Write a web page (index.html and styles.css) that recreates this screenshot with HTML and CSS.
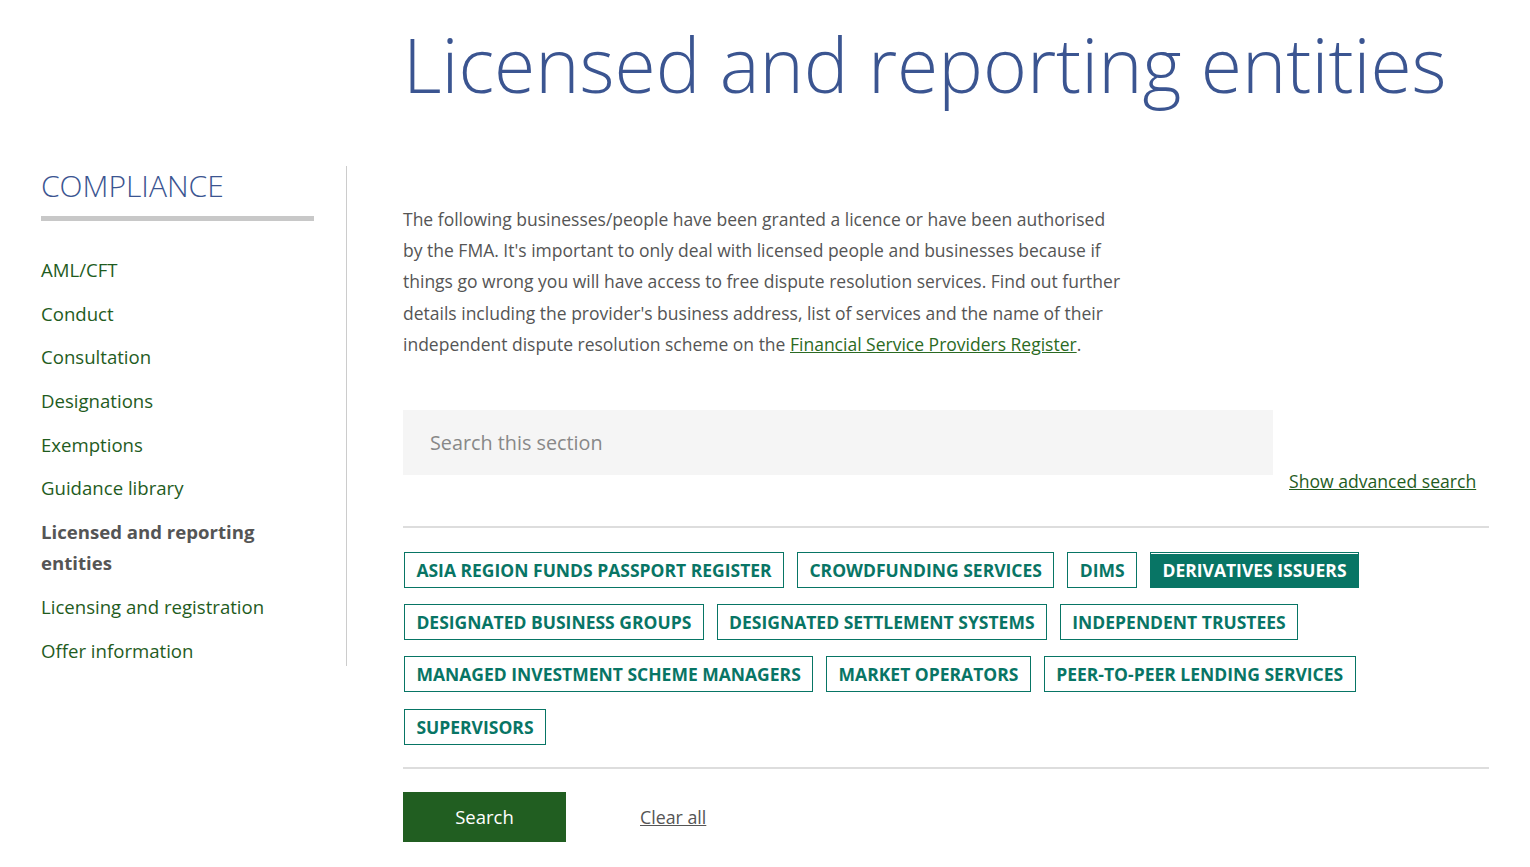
FILE: index.html
```html
<!DOCTYPE html>
<html lang="en">
<head>
<meta charset="utf-8">
<title>Licensed and reporting entities</title>
<link rel="stylesheet" href="styles.css">
</head>
<body>
<div class="page">
  <div class="title-row">
    <h1 class="title">Licensed and reporting entities</h1>
  </div>
  <div class="layout">
    <aside class="sidebar">
      <h2 class="side-heading">COMPLIANCE</h2>
      <div class="side-bar"></div>
      <ul class="side-nav">
        <li><a href="#">AML/CFT</a></li>
        <li><a href="#">Conduct</a></li>
        <li><a href="#">Consultation</a></li>
        <li><a href="#">Designations</a></li>
        <li><a href="#">Exemptions</a></li>
        <li><a href="#">Guidance library</a></li>
        <li class="current"><span>Licensed and reporting entities</span></li>
        <li><a href="#">Licensing and registration</a></li>
        <li><a href="#">Offer information</a></li>
      </ul>
    </aside>
    <main class="main">
      <p class="intro">The following businesses/people have been granted a licence or have been authorised by the FMA. It's important to only deal with licensed people and businesses because if things go wrong you will have access to free dispute resolution services. Find out further details including the provider's business address, list of services and the name of their independent dispute resolution scheme on the <a href="#">Financial Service Providers Register</a>.</p>
      <div class="search-row">
        <input class="search-input" type="text" placeholder="Search this section">
        <a class="adv-link" href="#">Show advanced search</a>
      </div>
      <hr class="rule">
      <div class="tags">
        <button class="tag">ASIA REGION FUNDS PASSPORT REGISTER</button>
        <button class="tag">CROWDFUNDING SERVICES</button>
        <button class="tag">DIMS</button>
        <button class="tag active">DERIVATIVES ISSUERS</button>
        <button class="tag">DESIGNATED BUSINESS GROUPS</button>
        <button class="tag">DESIGNATED SETTLEMENT SYSTEMS</button>
        <button class="tag">INDEPENDENT TRUSTEES</button>
        <button class="tag">MANAGED INVESTMENT SCHEME MANAGERS</button>
        <button class="tag">MARKET OPERATORS</button>
        <button class="tag">PEER-TO-PEER LENDING SERVICES</button>
        <button class="tag">SUPERVISORS</button>
      </div>
      <hr class="rule rule-bottom">
      <div class="actions">
        <button class="search-btn">Search</button>
        <a class="clear-link" href="#">Clear all</a>
      </div>
    </main>
  </div>
</div>
</body>
</html>
```

FILE: styles.css
```css
* { box-sizing: border-box; }
html, body { margin: 0; padding: 0; background: #fff; }
body {
  font-family: "Open Sans", "Liberation Sans", sans-serif;
  color: #555;
}
.page {
  width: 1530px;
  padding-left: 41px;
}
.title-row {
  padding-left: 362px;
  padding-top: 14px;
  height: 166px;
}
.title {
  margin: 0;
  font-weight: 300;
  font-size: 75px;
  line-height: 100px;
  color: #3b5591;
  white-space: nowrap;
}
.layout {
  display: grid;
  grid-template-columns: 306px 1fr;
  column-gap: 56px;
  align-items: start;
}
.sidebar {
  border-right: 1px solid #ccc;
  padding-right: 32px;
}
.side-heading {
  margin: 0;
  font-weight: 300;
  font-size: 30px;
  line-height: 40px;
  color: #3b5591;
}
.side-bar {
  height: 5px;
  background: #c8c8c8;
  margin-top: 10px;
}
.side-nav {
  list-style: none;
  margin: 33px 0 0;
  padding: 0;
}
.side-nav li {
  font-size: 18.6px;
  line-height: 31px;
  margin-bottom: 12.7px;
}
.side-nav li:last-child { margin-bottom: 0; }
.side-nav a {
  color: #1f5c1e;
  text-decoration: none;
}
.side-nav .current {
  font-weight: 700;
  color: #555;
}
.main {
  padding-right: 41px;
}
.intro {
  margin: 38px 0 0;
  width: 725px;
  font-size: 17.5px;
  line-height: 31.2px;
  color: #555;
}
.intro a {
  color: #2b6a23;
  text-decoration: underline;
}
.search-row {
  display: flex;
  align-items: flex-end;
  gap: 16px;
  margin-top: 50px;
}
.search-input {
  flex: none;
  width: 870px;
  height: 65px;
  border: 0;
  background: #f5f5f5;
  padding: 0 27px;
  font-family: inherit;
  font-size: 19.8px;
  color: #555;
  outline: none;
}
.search-input::placeholder { color: #888; }
.adv-link {
  white-space: nowrap;
  font-size: 17.6px;
  line-height: 26px;
  margin-bottom: -19px;
  color: #1f5c1e;
  text-decoration: underline;
}
.rule {
  border: 0;
  border-top: 2px solid #ddd;
  margin: 51px 0 0;
}
.tags {
  display: flex;
  flex-wrap: wrap;
  column-gap: 13px;
  row-gap: 16.2px;
  margin-top: 24px;
  padding-left: 1px;
}
.tag {
  font-family: inherit;
  font-weight: 700;
  font-size: 17.5px;
  line-height: 34px;
  height: 36px;
  padding: 0 11.4px;
  background: #fff;
  color: #087565;
  border: 1px solid #087565;
  cursor: pointer;
}
.tag.active {
  background: #087565;
  color: #fff;
  box-shadow: inset 0 1px 0 #fff;
}
.rule-bottom {
  margin-top: 22px;
}
.actions {
  display: flex;
  align-items: center;
  gap: 74px;
  margin-top: 23px;
}
.search-btn {
  width: 163px;
  height: 50px;
  border: 0;
  background: #215e21;
  color: #fff;
  font-family: inherit;
  font-size: 18.5px;
}
.clear-link {
  font-size: 17.8px;
  color: #555;
  text-decoration: underline;
}
```
